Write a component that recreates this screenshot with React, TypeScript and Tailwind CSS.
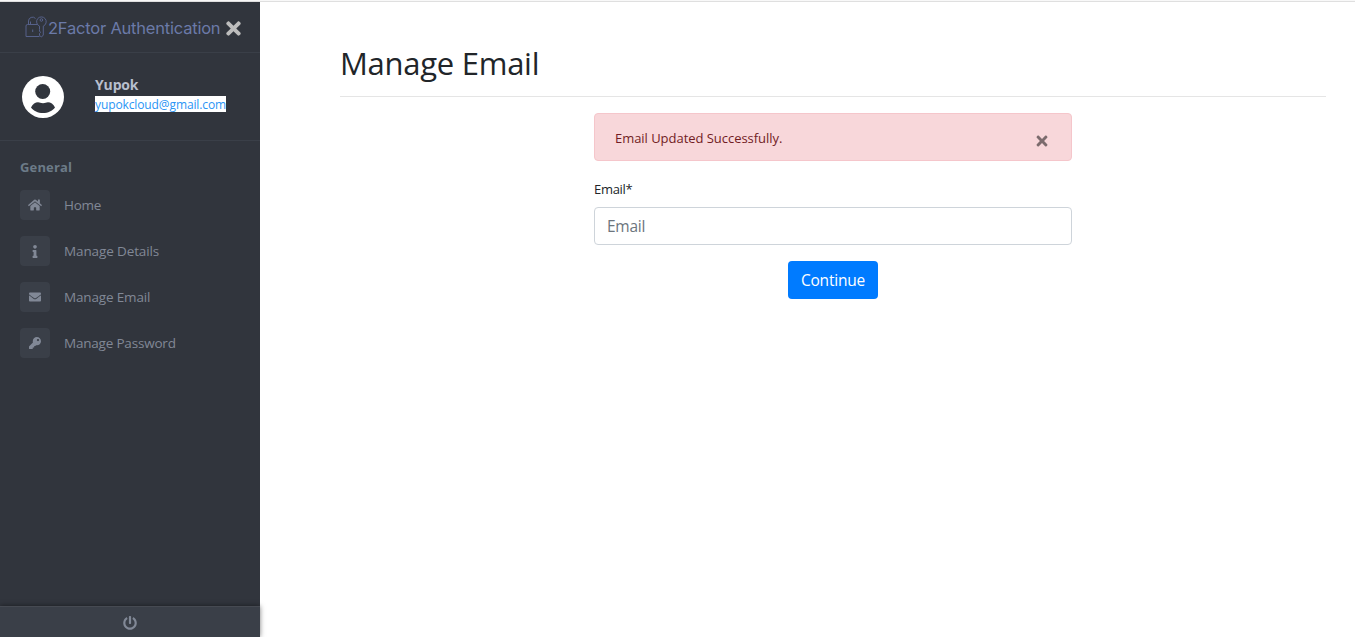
import React from "react";
import { FaHome, FaInfo, FaEnvelope, FaKey, FaPowerOff, FaTimes } from "react-icons/fa";

const items = [
  { label: "Home", Icon: FaHome, track: "tracking-[-0.25px]", size: "h-[14px] w-[14px]" },
  { label: "Manage Details", Icon: FaInfo, track: "tracking-[-0.12px]", size: "h-[13px] w-[14px]" },
  { label: "Manage Email", Icon: FaEnvelope, track: "tracking-[-0.16px]", size: "h-[12px] w-[12px]" },
  { label: "Manage Password", Icon: FaKey, track: "tracking-[-0.2px]", size: "h-[12px] w-[12px]" },
];

function LockKey() {
  return (
    <svg viewBox="0 0 22 22" className="mt-[5px] h-[22px] w-[22px] shrink-0" fill="none" stroke="#56618a" strokeWidth="1">
      <path d="M12.500 8.500H2.500A1.500 1.500 0 0 0 1 10V20.500H14.500" />
      <path d="M3.500 8.500V5A4 4 0 0 1 10.500 2.500M5.500 8.500V5.500" />
      <path d="M7.700 13.500v2.500" />
      <path d="M14.500 10.100A4.800 4.800 0 1 1 18.300 10.100V19L16.500 21L14.500 19.500V17.500L15.500 16.500L14.500 15V13.500z" />
      <circle cx="16.400" cy="4" r="1.300" />
    </svg>
  );
}

export default function App() {
  return (
    <div className="flex h-[637px] w-full flex-col overflow-hidden bg-white font-['Open_Sans','Noto_Sans',sans-serif]">
      <div className="h-[2px] shrink-0 border-b border-[#dfdfdf] bg-[#f8f8f8]" />
      <div className="flex min-h-0 flex-1">
        <aside className="flex w-[260px] shrink-0 flex-col bg-[#31353d]">
          <div className="flex h-[51px] shrink-0 items-start border-b border-[#3a3f48] pl-[25px] pt-[9px]">
            <LockKey />
            <span className="ml-px mt-[5px] w-[175px] whitespace-nowrap font-['Inter',sans-serif] text-[16.500px] leading-[24px] tracking-[-0.21px] text-[#6b7aa8]">
              2Factor Authentication
            </span>
            <FaTimes className="mt-[7px] h-[21px] w-[21px] text-[#bdbdbd]" />
          </div>
          <div className="flex h-[88px] shrink-0 border-b border-[#3a3f48] pl-[22px] pt-[23px]">
            <svg viewBox="0 0 42 42" className="h-[42px] w-[42px]">
              <circle cx="21" cy="21" r="21" fill="#fff" />
              <circle cx="20.700" cy="15.500" r="7.500" fill="#31353d" />
              <path d="M9 31.500C10.500 28 13.500 26.300 16 26.300C18 26.300 18.500 27.300 21 27.300S24 26.300 26 26.300C28.500 26.300 31.500 28 33 31.500C30.500 35 26 37 21 37S11.500 35 9 31.500z" fill="#31353d" />
            </svg>
            <div className="ml-[31px] flex flex-col items-start">
              <span className="h-[20px] text-[14px] font-bold leading-[18px] tracking-[-0.15px] text-[#b8bfce]">Yupok</span>
              <a className="h-[16px] whitespace-nowrap bg-white text-[12px] leading-[17px] tracking-[-0.11px] text-[#2a95f5]">
                yupokcloud@gmail.com
              </a>
            </div>
          </div>
          <div className="pt-[16px]">
            <div className="pl-[20px] text-[13px] font-bold leading-[21px] tracking-[0.15px] text-[#6c7b88]">General</div>
            <ul className="mt-[12px] flex flex-col gap-[16px] pl-[20px]">
              {items.map(({ label, Icon, track, size }) => (
                <li key={label} className="flex h-[30px] items-center">
                  <span className="flex h-[30px] w-[30px] items-center justify-center rounded-[4px] bg-[#3a3f48]">
                    <Icon className={`${size} text-[#818896]`} />
                  </span>
                  <span className={`ml-[14px] whitespace-nowrap text-[13.500px] leading-[30px] text-[#818896] ${track}`}>{label}</span>
                </li>
              ))}
            </ul>
          </div>
          <div className="mt-auto flex h-[31px] items-center justify-center border-t border-[#464a52] bg-[#3a3f48] pt-px shadow-[0_0_5px_rgba(0,0,0,0.5)]">
            <FaPowerOff className="h-[14px] w-[14px] text-[#818896]" />
          </div>
        </aside>
        <main className="flex-1 pl-[80px] pr-[29px] pt-[38px]">
          <h1 className="h-[57px] border-b border-[#e5e5e5] text-[31px] leading-[46px] tracking-[-0.27px] text-[#212529]">
            Manage Email
          </h1>
          <div className="mx-auto mt-[16px] flex w-[478px] flex-col">
            <div className="flex h-[48px] items-center justify-between rounded-[4px] border border-[#f5c6cb] bg-[#f8d7da] pl-[20px] pr-[20px]">
              <span className="pt-[3px] text-[13px] tracking-[-0.04px] text-[#721c24]">Email Updated Successfully.</span>
              <FaTimes className="mr-px mt-[8px] h-[16px] w-[16px] text-[#7c6b6d]" />
            </div>
            <label className="mt-[18px] text-[13px] leading-[20px] tracking-[-0.3px] text-[#212529]">Email*</label>
            <input
              placeholder="Email"
              className="mt-[8px] h-[38px] rounded-[4px] border border-[#ced4da] bg-white px-[12px] text-[15.500px] tracking-[-0.25px] outline-none placeholder:text-[#6c757d]"
            />
            <button className="mt-[16px] h-[38px] w-[90px] self-center rounded-[4px] bg-[#007bff] pt-[2px] text-[15.500px] tracking-[-0.2px] text-white">
              Continue
            </button>
          </div>
        </main>
      </div>
    </div>
  );
}
